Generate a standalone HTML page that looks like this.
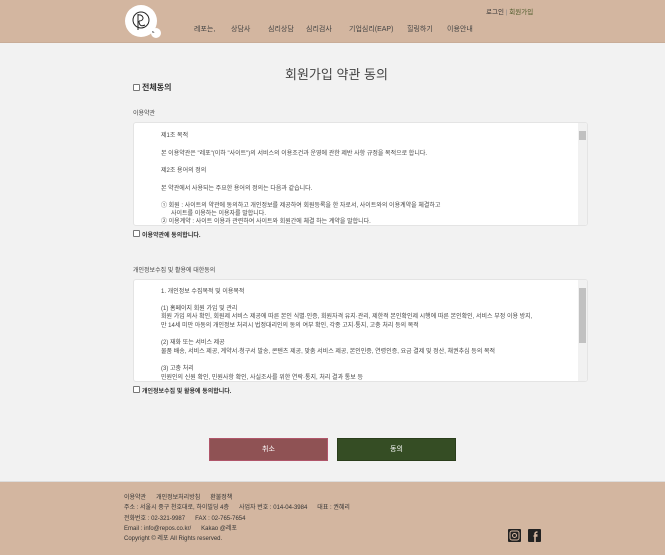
<!DOCTYPE html>
<html><head><meta charset="utf-8"><style>
*{margin:0;padding:0;box-sizing:border-box}
body{width:665px;height:555px;overflow:hidden;background:#f2f2f2;font-family:"Liberation Sans","Noto Sans CJK KR",sans-serif;color:#333;position:relative}
.a{position:absolute;white-space:nowrap}
.hdr{position:absolute;left:0;top:0;width:665px;height:43px;background:#d3b6a0;border-bottom:1px solid #c9ad98}
.nav{font-size:7px;color:#444;top:24px}
.box{position:absolute;left:133px;width:455px;background:#fff;border:1px solid #e4e4e4;border-radius:3px;overflow:hidden}
.box .sb{position:absolute;right:0;top:0;width:9px;height:100%;background:#f1f1f1}
.box .th{position:absolute;right:1px;width:7px;background:#c1c1c1}
.t{font-size:6px;color:#444;position:absolute;white-space:nowrap;line-height:8px}
.cb{position:absolute;width:7px;height:7px;border:1px solid #777;border-radius:1px;background:#fff}
.ft{font-size:6px;color:#333;position:absolute;white-space:nowrap}
</style></head><body>
<div class="hdr"></div>
<div class="a" style="left:125px;top:5px;width:32px;height:32px;border-radius:50%;background:#fff"></div>
<div class="a" style="left:151px;top:28px;width:10px;height:10px;border-radius:50%;background:#fff"></div>
<svg class="a" style="left:125px;top:5px" width="40" height="36" viewBox="0 0 40 36">
<circle cx="16" cy="15" r="8" fill="none" stroke="#222" stroke-width="1"/>
<path d="M13 25 V9 M13 10 C19 9 20 16 14 16 M20 20 C16 22 14 20 14 16" fill="none" stroke="#222" stroke-width="1"/>
<text x="27" y="28" font-size="4" fill="#222">s.</text></svg>
<div class="a nav" style="left:194px">레포는,</div>
<div class="a nav" style="left:231px">상담사</div>
<div class="a nav" style="left:268px">심리상담</div>
<div class="a nav" style="left:306px">심리검사</div>
<div class="a nav" style="left:349px">기업심리(EAP)</div>
<div class="a nav" style="left:407px">힐링하기</div>
<div class="a nav" style="left:447px">이용안내</div>
<div class="a" style="left:486px;top:6px;font-size:6.5px;color:#333">로그인 <span style="color:#888">|</span> <span style="color:#4d5a2a">회원가입</span></div>
<div class="a" style="left:285px;top:64px;font-size:13px;color:#444">회원가입 약관 동의</div>
<div class="cb" style="left:133px;top:84px"></div>
<div class="a" style="left:142px;top:82px;font-size:8px;font-weight:bold;color:#333">전체동의</div>
<div class="a" style="left:133px;top:108px;font-size:6px;color:#444">이용약관</div>
<div class="box" style="top:122px;height:104px">
<div class="sb"></div><div class="th" style="top:8px;height:9px"></div>
<div class="t" style="left:27px;top:9px">제1조 목적</div>
<div class="t" style="left:27px;top:27px">본 이용약관은 "레포"(이하 "사이트")의 서비스의 이용조건과 운영에 관한 제반 사항 규정을 목적으로 합니다.</div>
<div class="t" style="left:27px;top:44px">제2조 용어의 정의</div>
<div class="t" style="left:27px;top:62px">본 약관에서 사용되는 주요한 용어의 정의는 다음과 같습니다.</div>
<div class="t" style="left:27px;top:79px">① 회원 : 사이트의 약관에 동의하고 개인정보를 제공하여 회원등록을 한 자로서, 사이트와의 이용계약을 체결하고</div>
<div class="t" style="left:37px;top:87px">사이트를 이용하는 이용자를 말합니다.</div>
<div class="t" style="left:27px;top:95px">② 이용계약 : 사이트 이용과 관련하여 사이트와 회원간에 체결 하는 계약을 말합니다.</div>
</div>
<div class="cb" style="left:133px;top:230px"></div>
<div class="a" style="left:142px;top:230px;font-size:6px;font-weight:bold;color:#333">이용약관에 동의합니다.</div>
<div class="a" style="left:133px;top:265px;font-size:6px;color:#444">개인정보수집 및 활용에 대한동의</div>
<div class="box" style="top:279px;height:103px">
<div class="sb"></div><div class="th" style="top:8px;height:55px"></div>
<div class="t" style="left:27px;top:8px">1. 개인정보 수집목적 및 이용목적</div>
<div class="t" style="left:27px;top:25px">(1) 홈페이지 회원 가입 및 관리</div>
<div class="t" style="left:27px;top:33px">회원 가입 의사 확인, 회원제 서비스 제공에 따른 본인 식별·인증, 회원자격 유지·관리, 제한적 본인확인제 시행에 따른 본인확인, 서비스 부정 이용 방지,</div>
<div class="t" style="left:27px;top:42px">만 14세 미만 아동의 개인정보 처리시 법정대리인의 동의 여부 확인, 각종 고지·통지, 고충 처리 등의 목적</div>
<div class="t" style="left:27px;top:59px">(2) 재화 또는 서비스 제공</div>
<div class="t" style="left:27px;top:68px">물품 배송, 서비스 제공, 계약서·청구서 발송, 콘텐츠 제공, 맞춤 서비스 제공, 본인인증, 연령인증, 요금 결제 및 정산, 채권추심 등의 목적</div>
<div class="t" style="left:27px;top:85px">(3) 고충 처리</div>
<div class="t" style="left:27px;top:94px">민원인의 신원 확인, 민원사항 확인, 사실조사를 위한 연락·통지, 처리 결과 통보 등</div>
</div>
<div class="cb" style="left:133px;top:386px"></div>
<div class="a" style="left:142px;top:386px;font-size:6px;font-weight:bold;color:#333">개인정보수집 및 활용에 동의합니다.</div>
<div class="a" style="left:209px;top:438px;width:119px;height:23px;background:#8f5254;border:1px solid #b0566a;color:#fff;font-size:7px;text-align:center;line-height:21px">취소</div>
<div class="a" style="left:337px;top:438px;width:119px;height:23px;background:#354d24;border:1px solid #2b3e1c;color:#fff;font-size:7px;text-align:center;line-height:21px">동의</div>
<div class="a" style="left:0;top:481px;width:665px;height:74px;background:#d3b6a0;border-top:1px solid #ddd"></div>
<div class="ft" style="left:124px;top:492px">이용약관 &nbsp;&nbsp;&nbsp;&nbsp;&nbsp;개인정보처리방침 &nbsp;&nbsp;&nbsp;&nbsp;&nbsp;환불정책</div>
<div class="ft" style="left:124px;top:502px">주소 : 서울시 중구 천호대로, 하이빌딩 4층 &nbsp;&nbsp;&nbsp;&nbsp;&nbsp;사업자 번호 : 014-04-3984 &nbsp;&nbsp;&nbsp;&nbsp;&nbsp;대표 : 권혜리</div>
<div class="ft" style="left:124px;top:513px">전화번호 : 02-321-9987 &nbsp;&nbsp;&nbsp;&nbsp;&nbsp;FAX : 02-765-7654</div>
<div class="ft" style="left:124px;top:523px">Email : info@repos.co.kr/ &nbsp;&nbsp;&nbsp;&nbsp;&nbsp;Kakao @레포</div>
<div class="ft" style="left:124px;top:533px">Copyright © 레포 All Rights reserved.</div>
<svg class="a" style="left:508px;top:529px" width="13" height="13" viewBox="0 0 13 13"><rect width="13" height="13" rx="1" fill="#222"/><rect x="2" y="2" width="9" height="9" rx="2" fill="none" stroke="#d3b6a0" stroke-width="1"/><circle cx="6.5" cy="6.5" r="2" fill="none" stroke="#d3b6a0" stroke-width="1"/></svg>
<svg class="a" style="left:528px;top:529px" width="13" height="13" viewBox="0 0 13 13"><rect width="13" height="13" rx="1" fill="#222"/><path d="M7 13 V6 H9.5 M7 13 V5 C7 3.5 8 3 9.5 3 M5.5 7 H9.5" fill="none" stroke="#d3b6a0" stroke-width="1.6"/></svg>
</body></html>
